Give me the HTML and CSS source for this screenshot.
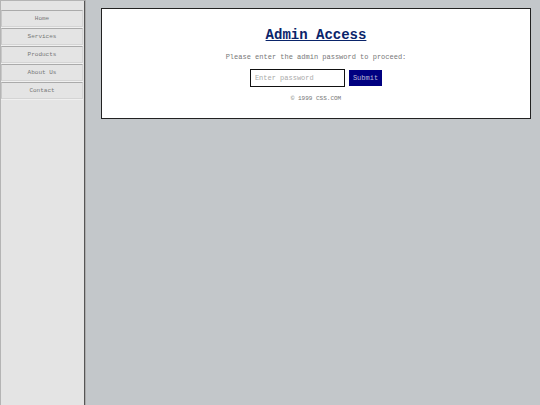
FILE: index.html
```
<!DOCTYPE html>
<html lang="en">
<head>
  <meta charset="UTF-8">
  <meta name="viewport" content="width=device-width, initial-scale=1.0">
  <title>Admin Access</title>
  <link rel="stylesheet" href="styles.css">
</head>
<body>
  <nav class="sidebar">
    <a href="#">Home</a>
    <a href="#">Services</a>
    <a href="#">Products</a>
    <a href="#">About Us</a>
    <a href="#">Contact</a>
  </nav>
  <main class="content">
    <div class="panel">
      <h1>Admin Access</h1>
      <label for="password">Please enter the admin password to proceed:</label>
      <form class="login">
        <input type="password" id="password" placeholder="Enter password">
        <button type="submit">Submit</button>
      </form>
      <footer>© 1999 CSS.COM</footer>
    </div>
  </main>
</body>
</html>
```
FILE: styles.css
```
* {
  box-sizing: border-box;
}

body {
  display: flex;
  min-height: 100vh;
  margin: 0;
  background-color: #c3c7ca;
  color: #777;
  font-family: "Courier New", "Liberation Mono", monospace;
  font-size: 7px;
}

.sidebar {
  display: flex;
  flex-direction: column;
  width: 86px;
  padding: 9px 1px 0 0;
  background-color: #e4e4e4;
  border: 1px solid #b4b4b4;
  border-right: 2px groove #aaa;
  border-bottom: 0;
}

.sidebar a {
  padding: 4px 0;
  border: 1px solid #c8c8c8;
  border-top-color: #aaa;
  border-right-color: #d4d4d4;
  border-bottom-color: #d4d4d4;
  box-shadow: 0 1px #f0f0f0;
  margin-bottom: 1px;
  color: #777;
  font-size: 6px;
  line-height: 7px;
  text-align: center;
  text-decoration: none;
}

.content {
  flex: 1;
  padding: 8px 9px 8px 15px;
}

.panel {
  padding: 17px 16px 15px;
  background-color: #fff;
  border: 1px solid #222;
  text-align: center;
}

h1 {
  margin: 0 0 9px;
  color: #0a246a;
  font-size: 14px;
  line-height: 18px;
  text-decoration: underline;
}

label {
  display: block;
  line-height: 8px;
}

.login {
  display: flex;
  justify-content: center;
  align-items: center;
  gap: 4px;
  margin: 8px 0;
}

input {
  width: 95px;
  height: 18px;
  padding: 0 4px;
  border: 1px solid #111;
  border-radius: 0;
  background-color: #fff;
  font-family: inherit;
  font-size: 7px;
}

input::placeholder {
  color: #aaa;
}

button {
  height: 16px;
  padding: 0 4px;
  border: 0;
  background-color: #000080;
  color: #b8b8d8;
  font-family: inherit;
  font-size: 7px;
}

footer {
  font-size: 6px;
  line-height: 8px;
}
```
